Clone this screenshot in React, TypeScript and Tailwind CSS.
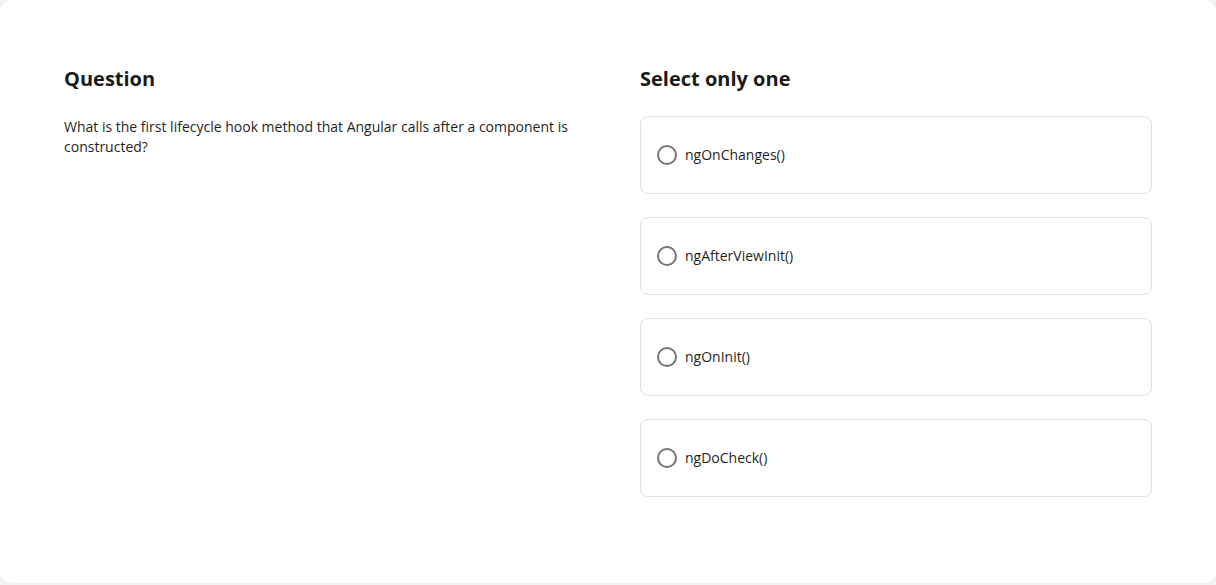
const OPTIONS = ["ngOnChanges()", "ngAfterViewInit()", "ngOnInit()", "ngDoCheck()"];

export default function App() {
  return (
    <div
      className="min-h-[585px] bg-[#f2f2f2] text-[#1f1f1f]"
      style={{ fontFamily: '"Open Sans", "Noto Sans", sans-serif' }}
    >
      <div className="h-[583px] rounded-xl bg-white px-16 pt-16">
        <div className="grid grid-cols-2 gap-16">
          <div>
            <h2 className="py-px text-xl leading-7 font-bold text-[#1a1a1a]">Question</h2>
            <p className="mt-[23px] text-sm leading-5">
              What is the first lifecycle hook method that Angular calls after a component is constructed?
            </p>
          </div>
          <div>
            <h2 className="py-px text-xl leading-7 font-bold text-[#1a1a1a]">Select only one</h2>
            <div className="mt-[22px] flex flex-col gap-[23px]">
              {OPTIONS.map((opt) => (
                <label
                  key={opt}
                  className="flex h-[78px] cursor-pointer items-center gap-2 rounded-lg border border-[#e0e0e0] px-4"
                >
                  <span className="h-5 w-5 shrink-0 rounded-full border-2 border-[#757575]" />
                  <span className="text-sm leading-5">{opt}</span>
                </label>
              ))}
            </div>
          </div>
        </div>
      </div>
    </div>
  );
}
